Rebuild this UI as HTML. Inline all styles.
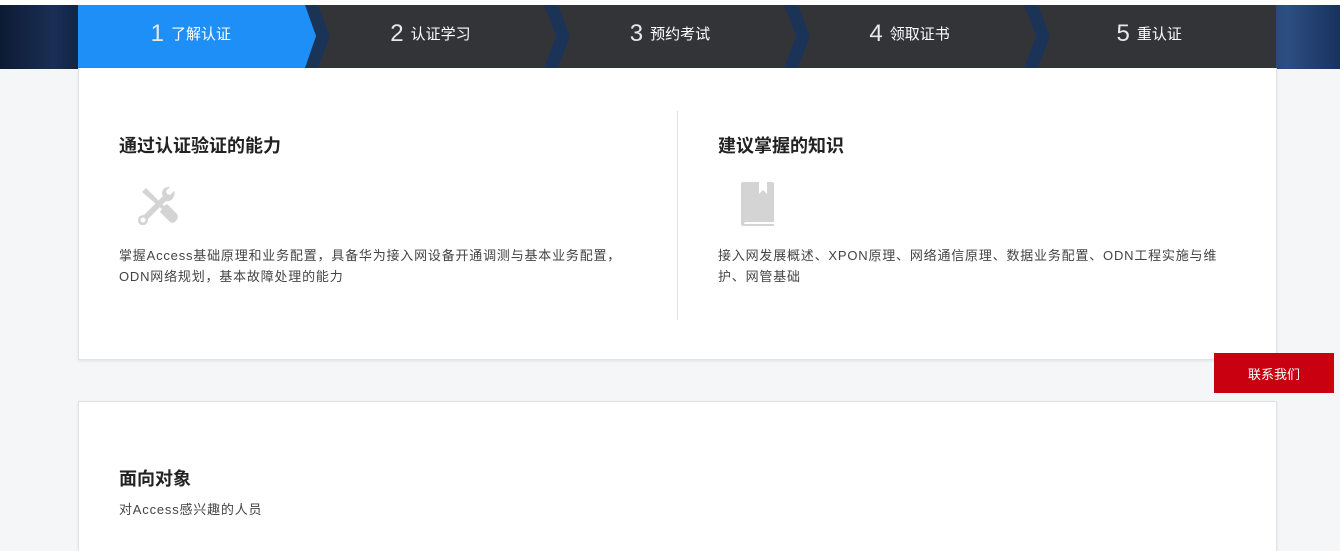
<!DOCTYPE html>
<html><head><meta charset="utf-8">
<style>
*{margin:0;padding:0;box-sizing:border-box}
html,body{width:1340px;height:551px;overflow:hidden}
body{background:#f5f6f8;font-family:"Liberation Sans","Noto Sans CJK SC",sans-serif;position:relative}
.top{position:absolute;left:0;top:5px;width:1340px;height:64px;background:linear-gradient(90deg,#0d1a33 0%,#1a2f55 4%,#0f2344 6%,#101e38 90%,#2c4f82 96%,#18325e 100%)}
.white{position:absolute;left:0;top:0;width:1340px;height:5px;background:#fff}
.steps{position:absolute;left:78px;top:5px;width:1198px;height:63px;background:#333438;display:flex}
.step{width:240px;height:63px;position:relative;color:#fff;display:flex;align-items:center;justify-content:center;font-size:15px;padding-right:14px;padding-bottom:6px}
.step .n{font-size:24px;margin-right:7px;font-weight:300;color:#e8e8e8}
.active{background:#1f8ff8}
.sep{position:absolute;top:0;height:63px;width:26px}
.card{position:absolute;left:78px;width:1199px;background:#fff;border:1px solid #e1e3e6;box-shadow:0 1px 3px rgba(0,0,0,.08)}
h3{position:absolute;font-size:18px;font-weight:bold;color:#222}
p{position:absolute;font-size:13px;color:#444;line-height:21px;letter-spacing:0.8px;white-space:nowrap}
.btn{position:absolute;left:1214px;top:353px;width:120px;height:40px;background:#c8000f;color:#fff;font-size:13px;display:flex;align-items:center;justify-content:center}
</style></head><body>
<div class="white"></div>
<div class="top"></div>
<div class="steps">
 <div class="step active"><span class="n">1</span>了解认证</div>
 <div class="step"><span class="n">2</span>认证学习</div>
 <div class="step"><span class="n">3</span>预约考试</div>
 <div class="step"><span class="n">4</span>领取证书</div>
 <div class="step"><span class="n">5</span>重认证</div>
 <svg class="sep" style="left:226px" viewBox="0 0 26 63"><polygon points="0,0 14,0 26,31 14,63 0,63 12,31" fill="#1c3358"/><polygon points="0,0 1,0 12,31 1,63 0,63" fill="#1f8ff8"/></svg>
 <svg class="sep" style="left:466px" viewBox="0 0 26 63"><polygon points="0,0 14,0 26,31 14,63 0,63 12,31" fill="#1c3358"/></svg>
 <svg class="sep" style="left:706px" viewBox="0 0 26 63"><polygon points="0,0 14,0 26,31 14,63 0,63 12,31" fill="#1c3358"/></svg>
 <svg class="sep" style="left:946px" viewBox="0 0 26 63"><polygon points="0,0 14,0 26,31 14,63 0,63 12,31" fill="#1c3358"/></svg>
</div>
<div class="card" style="top:68px;height:292px;border-top:none">
 <div style="position:absolute;left:598px;top:43px;width:1px;height:209px;background:#e3e3e3"></div>
 <h3 style="left:40px;top:64px">通过认证验证的能力</h3>
 <svg style="position:absolute;left:57px;top:116px" width="44" height="44" viewBox="0 0 44 44">
  <path d="M6 8 L10 4 L28 22 L31 20 L41 30 Q43 33 40 37 Q37 40 34 38 L24 28 L26 25 Z" fill="#d4d4d4"/>
  <path d="M34 3 Q28 2 26 8 Q26 11 27 12 L8 31 Q2 31 2 37 Q3 42 8 41 Q12 40 12 35 L30 17 Q36 18 38 12 Q39 9 38 7 L34 11 L31 10 L30 7 Z" fill="#d4d4d4"/>
  <circle cx="7" cy="36" r="2.5" fill="#fff"/>
 </svg>
 <p style="left:40px;top:177px">掌握Access基础原理和业务配置，具备华为接入网设备开通调测与基本业务配置，<br>ODN网络规划，基本故障处理的能力</p>
 <h3 style="left:639px;top:64px">建议掌握的知识</h3>
 <svg style="position:absolute;left:661px;top:114px" width="35" height="44" viewBox="0 0 35 44">
  <path d="M3 0 H19 V12 L23 8 L27 12 V0 H32 Q34 0 34 2 V40 H6 Q4 40 4 42 H34 V44 H3 Q1 44 1 41 V2 Q1 0 3 0 Z" fill="#d4d4d4"/>
 </svg>
 <p style="left:639px;top:177px">接入网发展概述、XPON原理、网络通信原理、数据业务配置、ODN工程实施与维<br>护、网管基础</p>
</div>
<div class="card" style="top:401px;height:150px;border-bottom:none">
 <h3 style="left:40px;top:63px">面向对象</h3>
 <p style="left:40px;top:97px">对Access感兴趣的人员</p>
</div>
<div class="btn">联系我们</div>
</body></html>
